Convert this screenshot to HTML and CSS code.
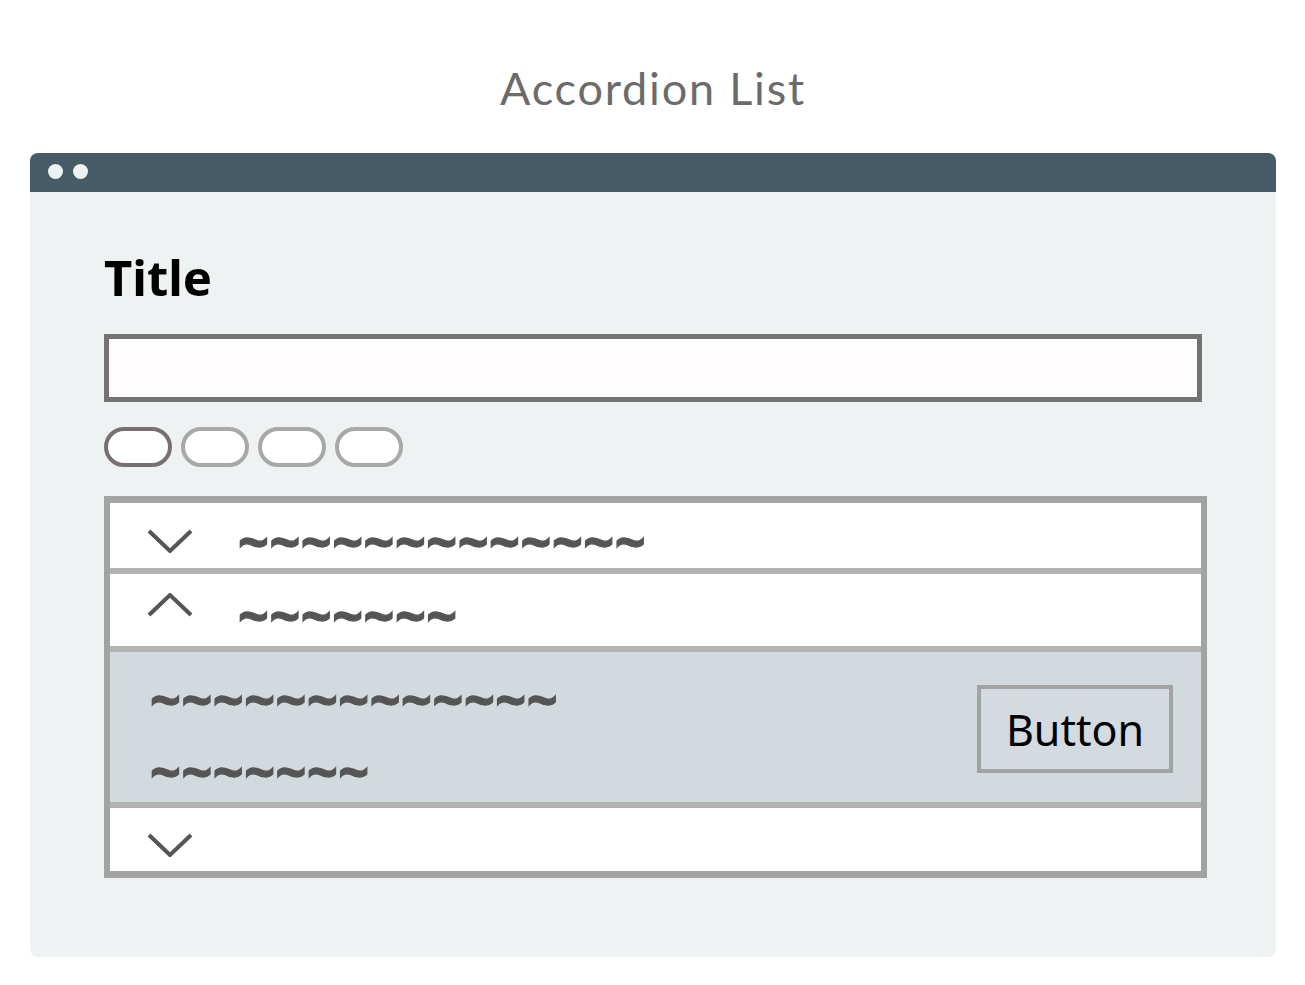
FILE: index.html
```html
<!DOCTYPE html>
<html lang="en">
<head>
<meta charset="utf-8">
<title>Accordion List</title>
<link rel="stylesheet" href="styles.css">
</head>
<body>
<h1 class="page-title">Accordion List</h1>
<div class="window">
  <div class="titlebar">
    <span class="dot"></span>
    <span class="dot"></span>
  </div>
  <div class="content">
    <h2 class="title">Title</h2>
    <div class="search"></div>
    <div class="chips">
      <span class="chip chip-active"></span>
      <span class="chip"></span>
      <span class="chip"></span>
      <span class="chip"></span>
    </div>
    <div class="accordion">
      <div class="row row-1">
        <svg class="chev" width="46" height="24" viewBox="0 0 46 24"><path d="M2 2 L23 22 L44 2" fill="none" stroke="#555" stroke-width="4"/></svg>
        <span class="squiggle">~~~~~~~~~~~~~</span>
      </div>
      <div class="row row-2">
        <svg class="chev chev-up" width="46" height="24" viewBox="0 0 46 24"><path d="M2 22 L23 2 L44 22" fill="none" stroke="#555" stroke-width="4"/></svg>
        <span class="squiggle">~~~~~~~</span>
      </div>
      <div class="panel">
        <div class="panel-text">
          <span class="squiggle">~~~~~~~~~~~~~</span>
          <span class="squiggle">~~~~~~~</span>
        </div>
        <div class="button">Button</div>
      </div>
      <div class="row row-4">
        <svg class="chev" width="46" height="24" viewBox="0 0 46 24"><path d="M2 2 L23 22 L44 2" fill="none" stroke="#555" stroke-width="4"/></svg>
      </div>
    </div>
  </div>
</div>
</body>
</html>
```
FILE: styles.css
```css
html, body {
  margin: 0;
  padding: 0;
  background: #ffffff;
}
body {
  font-family: "Noto Sans", "DejaVu Sans", sans-serif;
  padding: 56px 29px 0 30px;
}
.page-title {
  margin: 0 0 33px;
  text-align: center;
  font-family: "Lato", "Noto Sans", sans-serif;
  font-weight: 400;
  font-size: 45px;
  letter-spacing: 1.8px;
  line-height: 64px;
  color: #6b6b6b;
}
.window {
  background: #eef2f3;
  border-radius: 8px;
  overflow: hidden;
  height: 804px;
}
.titlebar {
  height: 39px;
  background: #465b66;
  display: flex;
  align-items: center;
  gap: 10px;
  padding: 0 0 2px 18px;
  box-sizing: border-box;
}
.dot {
  width: 15px;
  height: 15px;
  border-radius: 50%;
  background: #eef2f3;
}
.content {
  padding: 50px 74px 0 74px;
}
.title {
  margin: 0;
  font-family: "Noto Sans", sans-serif;
  font-weight: 700;
  font-size: 49px;
  line-height: 70px;
  color: #000;
}
.search {
  margin-top: 22px;
  height: 68px;
  box-sizing: border-box;
  border: 5px solid #737373;
  background: #fffcfd;
}
.chips {
  display: flex;
  gap: 9px;
  margin-top: 25px;
}
.chip {
  width: 68px;
  height: 40px;
  box-sizing: border-box;
  border: 4px solid #a8a8a8;
  border-radius: 20px;
  background: #ffffff;
}
.chip-active {
  border-color: #787070;
}
.accordion {
  margin-top: 29px;
  margin-right: -5px;
  border: 7px solid #a3a3a3;
  border-left-width: 6px;
  border-right-width: 6px;
  background: #ffffff;
}
.row {
  display: flex;
  align-items: flex-start;
  padding-left: 37px;
  box-sizing: border-box;
  background: #ffffff;
}
.row-1 {
  height: 65px;
  padding-top: 26px;
}
.row-2 {
  height: 78px;
  border-top: 6px solid #b3b3b3;
  padding-top: 19px;
}
.row-4 {
  height: 69px;
  border-top: 6px solid #b3b3b3;
  padding-top: 25px;
}
.chev {
  display: block;
  flex: none;
}
.squiggle {
  display: block;
  font-family: "Noto Sans", sans-serif;
  font-weight: 700;
  font-size: 54px;
  line-height: 24px;
  letter-spacing: 0.5px;
  color: #555555;
  -webkit-text-stroke: 1.3px #555555;
  white-space: nowrap;
}
.row .squiggle {
  margin-left: 45px;
}
.row-2 .squiggle {
  margin-top: 10px;
}
.panel {
  display: flex;
  align-items: center;
  justify-content: space-between;
  height: 156px;
  box-sizing: border-box;
  border-top: 6px solid #b3b3b3;
  background: #d3dadd;
  padding: 0 28px 0 40px;
}
.panel-text {
  display: flex;
  flex-direction: column;
  gap: 48px;
  margin-top: 16px;
}
.button {
  width: 196px;
  height: 88px;
  box-sizing: border-box;
  border: 4px solid #a3a3a3;
  background: #d3dae0;
  display: flex;
  align-items: center;
  justify-content: center;
  font-family: "Noto Sans", sans-serif;
  font-size: 43px;
  color: #000;
  margin-top: 4px;
}
```
